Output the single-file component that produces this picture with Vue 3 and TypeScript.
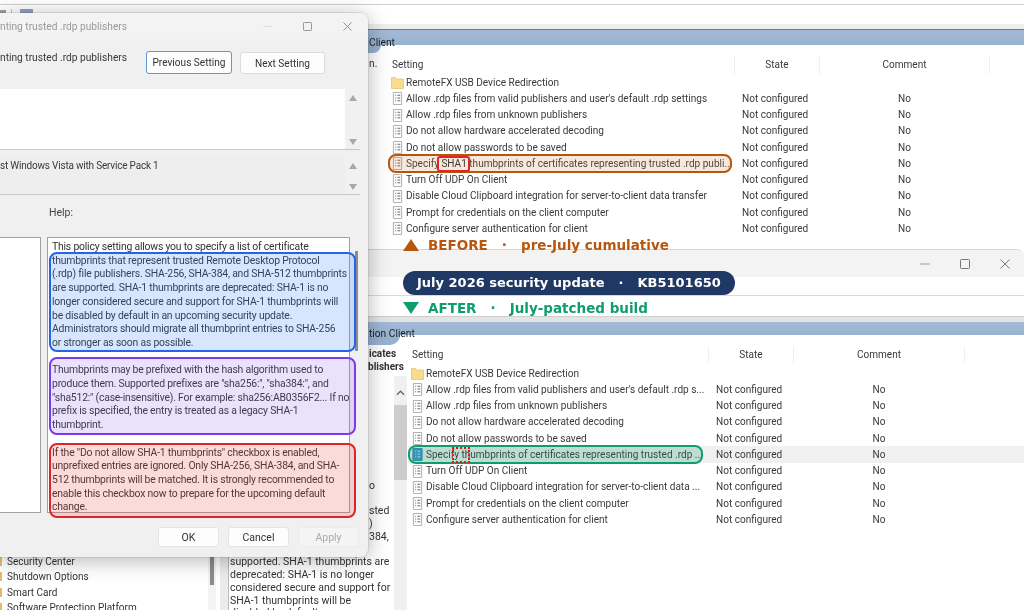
<script setup lang="ts">
const beforeRows: string[] = [
  "Allow .rdp files from valid publishers and user's default .rdp settings",
  'Allow .rdp files from unknown publishers',
  'Do not allow hardware accelerated decoding',
  'Do not allow passwords to be saved',
  'SPECIAL',
  'Turn Off UDP On Client',
  'Disable Cloud Clipboard integration for server-to-client data transfer',
  'Prompt for credentials on the client computer',
  'Configure server authentication for client',
]
const afterRows: string[] = [
  "Allow .rdp files from valid publishers and user's default .rdp s...",
  'Allow .rdp files from unknown publishers',
  'Do not allow hardware accelerated decoding',
  'Do not allow passwords to be saved',
  'SPECIAL',
  'Turn Off UDP On Client',
  'Disable Cloud Clipboard integration for server-to-client data ...',
  'Prompt for credentials on the client computer',
  'Configure server authentication for client',
]
const paneFragments: string[] = ['o', '', 'sted', ')', '384,', '']
const paneLines: string[] = [
  'supported. SHA-1 thumbprints are',
  'deprecated: SHA-1 is no longer',
  'considered secure and support for',
  'SHA-1 thumbprints will be',
  'disabled by default',
]
const treeItems: string[] = ['Security Center', 'Shutdown Options', 'Smart Card', 'Software Protection Platform']
const helpBlocks: string[][] = [
  [
    'This policy setting allows you to specify a list of certificate',
    'thumbprints that represent trusted Remote Desktop Protocol',
    '(.rdp) file publishers. SHA-256, SHA-384, and SHA-512 thumbprints',
    'are supported. SHA-1 thumbprints are deprecated: SHA-1 is no',
    'longer considered secure and support for SHA-1 thumbprints will',
    'be disabled by default in an upcoming security update.',
    'Administrators should migrate all thumbprint entries to SHA-256',
    'or stronger as soon as possible.',
  ],
  [
    'Thumbprints may be prefixed with the hash algorithm used to',
    'produce them. Supported prefixes are "sha256:", "sha384:", and',
    '"sha512:" (case-insensitive). For example: sha256:AB0356F2... If no',
    'prefix is specified, the entry is treated as a legacy SHA-1',
    'thumbprint.',
  ],
  [
    'If the "Do not allow SHA-1 thumbprints" checkbox is enabled,',
    'unprefixed entries are ignored. Only SHA-256, SHA-384, and SHA-',
    '512 thumbprints will be matched. It is strongly recommended to',
    'enable this checkbox now to prepare for the upcoming default',
    'change.',
  ],
]
</script>

<template>
  <div class="desk">
    <!-- upper (before) window -->
    <section class="win win-before">
      <div class="topline"></div>
      <div class="toolbar">
        <i class="tool-a"></i><i class="tool-sep"></i><i class="tool-b"></i>
      </div>
      <div class="strip"></div>
      <div class="band"><span class="band-text">Client</span></div>
      <div class="body">
        <div class="side">
          <div class="tab"></div>
          <span class="side-n">n.</span>
        </div>
        <div class="list">
          <div class="row head">
            <span class="c1">Setting</span><span class="c2">State</span><span class="c3">Comment</span>
          </div>
          <div class="row">
            <span class="c1"><svg class="ico folder" viewBox="0 0 13 13"><path d="M.5 12.5V1.5h4l1.2 1.5h6.8v9.5z" fill="#f8dc8e" stroke="#e6c46c" stroke-width=".8"/></svg>RemoteFX USB Device Redirection</span>
          </div>
          <div v-for="r in beforeRows" :key="r" class="row" :class="{ mark: r === 'SPECIAL' }">
            <span class="c1">
              <svg class="ico" viewBox="0 0 12 14"><path d="M1.5.5h9v13h-9z" fill="#fff" stroke="#a9a9a9"/><path d="M3.5 3.5h1M3.5 6.5h1M3.5 9.5h1M6 3.5h3M6 6.5h3M6 9.5h3" stroke="#555" stroke-width="1"/></svg>
              <template v-if="r === 'SPECIAL'">Specify <span class="sha">SHA1</span> thumbprints of certificates representing trusted .rdp publi...</template>
              <template v-else>{{ r }}</template>
            </span>
            <span class="c2">Not configured</span><span class="c3">No</span>
            <i v-if="r === 'SPECIAL'" class="hl hl-orange"></i>
          </div>
        </div>
      </div>
    </section>

    <!-- lower (after) window -->
    <section class="win win-after">
      <div class="titlebar">
        <svg class="ctl" viewBox="0 0 10 10"><path d="M0 5h10" stroke="#999" fill="none"/></svg>
        <svg class="ctl" viewBox="0 0 10 10"><rect x=".5" y=".5" width="9" height="9" rx="1" stroke="#777" fill="none"/></svg>
        <svg class="ctl" viewBox="0 0 10 10"><path d="M.5.5l9 9M9.5.5l-9 9" stroke="#777" fill="none"/></svg>
      </div>
      <div class="menu-after"></div>
      <div class="tool-after"></div>
      <div class="strip-after"></div>
      <div class="band band-after"><span class="band-text band-text-after">tion Client</span></div>
      <div class="body body-after">
        <div class="side side-after">
          <div class="tab tab-after"></div>
          <div class="tree">
            <div v-for="t in treeItems" :key="t" class="tree-item"><i class="tree-folder"></i>{{ t }}</div>
          </div>
          <div class="tree-scroll"><i></i></div>
          <div class="split"></div>
          <div class="pane-text">
            <div v-for="(l, i) in paneFragments" :key="i" class="pane-line frag">{{ l }}</div>
            <div v-for="l in paneLines" :key="l" class="pane-line">{{ l }}</div>
          </div>
          <div class="bold-labels"><span>icates</span><span class="bl2">blishers</span></div>
          <div class="vscroll">
            <svg viewBox="0 0 10 6" class="chev"><path d="M1 5l4-4 4 4" fill="none" stroke="#666" stroke-width="1.4"/></svg>
            <i class="vthumb"></i>
          </div>
        </div>
        <div class="list list-after">
          <div class="row head">
            <span class="c1">Setting</span><span class="c2">State</span><span class="c3">Comment</span>
          </div>
          <div class="row">
            <span class="c1"><svg class="ico folder" viewBox="0 0 13 13"><path d="M.5 12.5V1.5h4l1.2 1.5h6.8v9.5z" fill="#f8dc8e" stroke="#e6c46c" stroke-width=".8"/></svg>RemoteFX USB Device Redirection</span>
          </div>
          <div v-for="r in afterRows" :key="r" class="row" :class="{ mark: r === 'SPECIAL', hover: r === 'SPECIAL' }">
            <span class="c1">
              <svg v-if="r === 'SPECIAL'" class="ico" viewBox="0 0 12 14"><path d="M1 .5h10v13H1z" fill="#3d97cc" stroke="#2f7fb0"/><path d="M3.5 3.5h1M3.5 6.5h1M3.5 9.5h1M6 3.5h3M6 6.5h3M6 9.5h3" stroke="#d5ecf7" stroke-width="1"/></svg>
              <svg v-else class="ico" viewBox="0 0 12 14"><path d="M1.5.5h9v13h-9z" fill="#fff" stroke="#a9a9a9"/><path d="M3.5 3.5h1M3.5 6.5h1M3.5 9.5h1M6 3.5h3M6 6.5h3M6 9.5h3" stroke="#555" stroke-width="1"/></svg>
              <template v-if="r === 'SPECIAL'">Specif<span class="gap">y th</span>umbprints of certificates representing trusted .rdp ...</template>
              <template v-else>{{ r }}</template>
            </span>
            <span class="c2">Not configured</span><span class="c3">No</span>
            <i v-if="r === 'SPECIAL'" class="hl hl-green"></i>
          </div>
        </div>
      </div>
    </section>

    <!-- annotations over the windows -->
    <div class="caption cap-before"><i class="tri-up"></i><b>BEFORE</b><b class="dot">·</b><b>pre-July cumulative</b></div>
    <div class="pill"><span>July 2026 security update</span><span class="dot">·</span><span>KB5101650</span></div>
    <div class="caption cap-after"><i class="tri-down"></i><b>AFTER</b><b class="dot">·</b><b>July-patched build</b></div>

    <!-- properties dialog -->
    <section class="dialog">
      <div class="dlg-title">
        <span class="dlg-title-text">nting trusted .rdp publishers</span>
        <svg class="dctl dctl-min" viewBox="0 0 10 10"><path d="M0 5h10" stroke="#ddd" fill="none"/></svg>
        <svg class="dctl" viewBox="0 0 10 10"><rect x=".5" y=".5" width="9" height="9" rx="1" stroke="#888" fill="none"/></svg>
        <svg class="dctl" viewBox="0 0 10 10"><path d="M.5.5l9 9M9.5.5l-9 9" stroke="#888" fill="none"/></svg>
      </div>
      <div class="dlg-head">
        <span class="dlg-name">nting trusted .rdp publishers</span>
        <button class="btn btn-prev">Previous Setting</button>
        <button class="btn btn-next">Next Setting</button>
      </div>
      <div class="comment-box">
        <div class="arrows"><i class="up"></i><i class="down"></i></div>
      </div>
      <div class="support-box">
        <span class="support-text">st Windows Vista with Service Pack 1</span>
        <div class="arrows"><i class="up"></i><i class="down"></i></div>
      </div>
      <div class="help-label">Help:</div>
      <div class="panes">
        <div class="opt-box"></div>
        <div class="help-box">
          <p v-for="(b, i) in helpBlocks" :key="i" class="help-p">
            <span v-for="l in b" :key="l" class="help-line">{{ l }}</span>
          </p>
        </div>
        <i class="thumb-dark"></i>
        <i class="note note-blue"></i>
        <i class="note note-purple"></i>
        <i class="note note-red"></i>
      </div>
      <div class="dlg-foot">
        <button class="btn foot">OK</button>
        <button class="btn foot">Cancel</button>
        <button class="btn foot off">Apply</button>
      </div>
    </section>
  </div>
</template>

<style>
html, body { margin: 0; background: #fff; overflow: hidden; }
</style>

<style scoped>
.desk {
  position: relative;
  width: 1024px;
  height: 610px;
  overflow: hidden;
  background: #fff;
  font-family: Roboto, "Noto Sans", sans-serif;
  color: #333;
  filter: blur(0.4px);
}
.win { position: absolute; left: 0; width: 1024px; background: #fff; display: flex; flex-direction: column; }
.win-before { top: 0; height: 249px; }
.win-after { top: 249px; height: 361px; border-top: 1px solid #d4d4d4; border-radius: 0 8px 0 0; box-sizing: border-box; }
.topline { height: 4px; border-bottom: 1px solid #cfcfcf; box-sizing: content-box; }
.toolbar { height: 19px; display: flex; align-items: flex-start; padding-top: 4px; box-sizing: border-box; }
.toolbar i { display: block; }
.tool-a { width: 6px; height: 4px; margin-top: 1px; background: #9aa0a6; }
.tool-sep { width: 1px; height: 9px; margin-left: 5px; background: #c9c9c9; }
.tool-b { width: 13px; height: 6px; margin-left: 8px; background: #8ca4c4; }
.strip { height: 5px; background: #efefef; border-bottom: 1px solid #777; }
.band { height: 15px; background: linear-gradient(#a3bad6, #97b2d1); display: flex; align-items: flex-end; }
.band-text { padding-left: 369px; font-size: 10.2px; line-height: 12px; transform: translateY(4px); color: #222; position: relative; z-index: 1; }
.body { flex: 1; display: flex; min-height: 0; }
.side { width: 388px; flex: none; position: relative; }
.tab { position: absolute; left: 0; top: 0; width: 381px; height: 8px; background: #97b2d1; border-bottom-right-radius: 12px; }
.side-n { position: absolute; left: 369px; top: 13px; font-size: 10.2px; line-height: 12px; color: #333; }
.list { flex: 1; min-width: 0; }
.row {
  position: relative;
  display: grid;
  grid-template-columns: 346px 85px 171px;
  height: 16.25px;
  padding-top: 1px;
  box-sizing: border-box;
  align-items: center;
  font-size: 10.05px;
  line-height: 14px;
  white-space: nowrap;
  color: #3a3a3a;
}
.row.head { height: 18px; margin-top: 11px; padding-top: 0; }
.c1 { padding-left: 4px; display: flex; align-items: center; white-space: pre; }
.c2 { padding-left: 8px; }
.c3 { text-align: center; }
.head .c2 { padding-left: 0; text-align: center; border-left: 1px solid #f0f0f0; }
.head .c3 { border-left: 1px solid #f0f0f0; border-right: 1px solid #f0f0f0; }
.head .c1, .head .c2, .head .c3 { height: 18px; line-height: 18px; }
.ico { width: 11px; height: 13px; margin-right: 3px; flex: none; }
.ico.folder { width: 13px; margin-left: -1px; margin-right: 2px; }
.hl { position: absolute; left: 0; top: -1.5px; bottom: -1.5px; border-radius: 8px; border: 2px solid; box-sizing: border-box; pointer-events: none; }
.hl-orange { width: 344px; border-color: #b5560f; background: rgba(214, 120, 40, 0.17); }
.hl-green { width: 295px; border-color: #0f9d6c; background: rgba(16, 150, 110, 0.22); }
.sha { position: relative; z-index: 1; }
.sha::after { content: ""; position: absolute; left: -4px; right: -3px; top: -1px; bottom: -1px; border: 2px solid #e02424; border-radius: 3px; }
.gap { position: relative; z-index: 1; }
.gap::after { content: ""; position: absolute; left: -2px; right: 0; top: -1px; bottom: -1px; border: 2px dotted #e01818; }

.titlebar { height: 27px; background: #f3f3f3; display: flex; justify-content: flex-end; align-items: center; gap: 30px; padding-right: 14px; box-sizing: border-box; border-radius: 0 8px 0 0; }
.ctl { width: 10px; height: 10px; }
.menu-after { height: 18px; border-bottom: 1px solid #d9d9d9; box-sizing: content-box; }
.tool-after { height: 20px; }
.strip-after { height: 6px; background: #e4e4e4; border-top: 1px solid #cfcfcf; box-sizing: border-box; }
.band-after { height: 13px; }
.band-text-after { transform: translateY(5px); padding-left: 369px; }
.side-after { width: 408px; display: flex; overflow: hidden; }
.tab-after { width: 400px; height: 10px; z-index: 0; }
.tree { width: 208px; flex: none; padding-top: 218.5px; font-size: 10px; box-sizing: border-box; }
.tree-item { height: 15.5px; line-height: 15.5px; padding-left: 7px; position: relative; white-space: nowrap; color: #333; }
.tree-folder { position: absolute; left: 0; top: 3px; width: 2px; height: 9px; background: #e3bd66; }
.tree-scroll { width: 8px; flex: none; background: #f3f3f3; padding-top: 215px; padding-left: 2px; box-sizing: border-box; }
.tree-scroll i { display: block; width: 4px; height: 35px; background: #8d8d8d; }
.split { width: 9px; flex: none; margin-left: 4px; background: #ececec; border-right: 1px solid #bcbcbc; box-sizing: border-box; }
.pane-text { width: 164px; flex: none; padding-top: 144.5px; padding-left: 1px; font-size: 10.5px; line-height: 12.8px; white-space: nowrap; box-sizing: border-box; color: #333; }
.pane-line { height: 12.8px; }
.pane-line.frag { padding-left: 139px; }
.bold-labels { position: absolute; left: 369px; top: 12px; display: flex; flex-direction: column; font-size: 10px; font-weight: 700; line-height: 13px; color: #333; }
.bl2 { margin-left: -1px; }
.vscroll { position: absolute; left: 394px; top: 41px; bottom: 0; width: 13px; background: #f0f0f0; }
.chev { display: block; width: 9px; height: 6px; margin: 14px auto 9px; }
.vthumb { display: block; height: 75px; background: #cdcdcd; }
.list-after .row { grid-template-columns: 300px 85px 172px; }
.list-after .row.head { height: 19px; padding-bottom: 1px; }
.list-after .row.hover { background: #f0f0f0; }

.caption { position: absolute; left: 403px; display: flex; align-items: center; font-size: 13.5px; line-height: 18px; white-space: nowrap; font-family: "DejaVu Sans", sans-serif; }
.caption b { font-weight: 700; }
.caption .dot { margin: 0 14px; }
.cap-before { top: 236px; color: #b8560f; }
.cap-after { top: 299px; color: #0f9d6c; }
.tri-up { width: 0; height: 0; border-left: 8px solid transparent; border-right: 8px solid transparent; border-bottom: 12px solid #b8560f; margin-right: 9px; }
.tri-down { width: 0; height: 0; border-left: 8px solid transparent; border-right: 8px solid transparent; border-top: 12px solid #0f9d6c; margin-right: 9px; }
.pill { position: absolute; left: 403px; top: 271px; width: 332px; height: 24px; box-sizing: border-box; padding-left: 14px; border-radius: 12px; background: #1f3864; color: #fff; display: flex; align-items: center; font: 700 13px/24px "DejaVu Sans", sans-serif; white-space: nowrap; }
.pill .dot { margin: 0 14px; }

.dialog {
  position: absolute; left: 0; top: 13px; width: 368px; height: 544px;
  background: #f0f0f0; border-radius: 0 8px 8px 0; box-shadow: 0 3px 22px rgba(0,0,0,.3), 0 0 0 1px rgba(0,0,0,.08);
  display: flex; flex-direction: column; font-size: 10.2px;
}
.dlg-title { height: 26px; flex: none; background: #f3f3f3; border-radius: 0 8px 0 0; display: flex; align-items: center; padding-right: 16px; color: #9a9a9a; }
.dlg-title-text { margin-right: auto; white-space: nowrap; }
.dctl { width: 9px; height: 9px; margin-left: 31px; }
.dctl-min { margin-left: 0; }
.dlg-head { height: 50px; flex: none; display: flex; align-items: flex-start; padding-top: 12px; box-sizing: border-box; }
.dlg-name { width: 146px; flex: none; line-height: 13px; white-space: nowrap; color: #3a3a3a; }
.btn { font: inherit; font-size: 10.1px; color: #333; background: #fdfdfd; border: 1px solid #dcdcdc; border-radius: 3px; padding: 0; height: 22px; box-sizing: border-box; }
.btn-prev { width: 86px; height: 23px; border: 1.5px solid #5b9bd5; }
.btn-next { width: 85px; margin-left: 8px; margin-top: 1px; }
.comment-box { width: 360px; height: 61px; flex: none; background: #fff; border-bottom: 1px solid #c8c8c8; display: flex; justify-content: flex-end; box-sizing: border-box; }
.arrows { width: 15px; background: #f1f1f1; display: flex; flex-direction: column; justify-content: space-between; align-items: center; padding: 6px 0 4px; box-sizing: border-box; }
.up { width: 0; height: 0; border-left: 4px solid transparent; border-right: 4px solid transparent; border-bottom: 6px solid #a8a8a8; }
.down { width: 0; height: 0; border-left: 4px solid transparent; border-right: 4px solid transparent; border-top: 6px solid #a8a8a8; }
.support-box { width: 360px; height: 38px; margin-top: 7px; flex: none; background: #eeeeee; border-bottom: 1px solid #c8c8c8; display: flex; justify-content: space-between; box-sizing: border-box; }
.support-text { line-height: 15px; padding-top: 1px; white-space: nowrap; color: #3a3a3a; font-size: 10px; letter-spacing: -0.2px; }
.help-label { height: 42px; flex: none; padding: 11px 0 0 49px; box-sizing: border-box; line-height: 14px; color: #444; font-size: 10.5px; }
.panes { position: relative; height: 276px; flex: none; display: flex; }
.opt-box { width: 41px; flex: none; background: #fff; border: 1px solid #a0a0a0; border-left: 0; box-sizing: border-box; }
.help-box { width: 303px; margin-left: 6px; flex: none; background: #fff; border: 1px solid #a0a0a0; box-sizing: border-box; padding: 2px 0 0 4px; font-size: 10.4px; letter-spacing: -0.2px; line-height: 13.7px; color: #333; overflow: hidden; }
.help-p { margin: 0 0 13.7px; }
.help-line { display: block; white-space: nowrap; }
.thumb-dark { position: absolute; left: 355px; top: 14px; width: 3px; height: 100px; background: #8c8c8c; }
.note { position: absolute; left: 49px; width: 307px; border: 2px solid; border-radius: 8px; box-sizing: border-box; }
.note-blue { top: 15px; height: 100px; border-color: #2563eb; background: rgba(59, 130, 246, 0.2); }
.note-purple { top: 120px; height: 78px; border-color: #7c3aed; background: rgba(139, 92, 246, 0.18); }
.note-red { top: 206px; height: 75px; border-color: #dc2626; background: rgba(239, 68, 68, 0.2); }
.dlg-foot { flex: 1; display: flex; justify-content: flex-end; gap: 9px; padding: 14px 9px 0 0; box-sizing: border-box; }
.foot { width: 61px; height: 20px; border-color: #e4e4e4; font-size: 10.5px; }
.foot.off { color: #aaa; background: #f4f4f4; border-color: #ececec; }
</style>
